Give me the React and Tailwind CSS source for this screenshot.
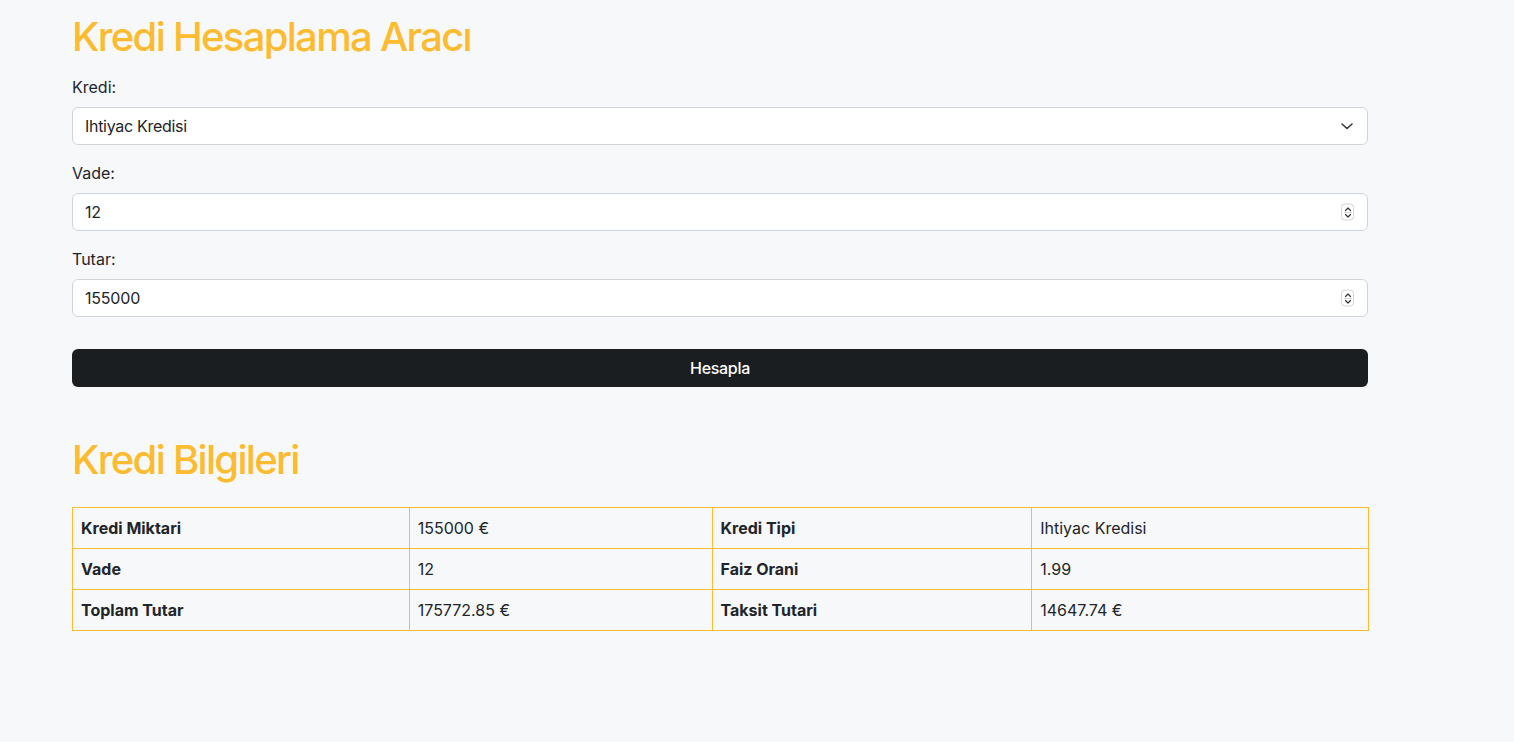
import React from "react";

const font = { fontFamily: "Inter, 'Noto Sans', 'Liberation Sans', sans-serif" };

function Spinner() {
  return (
    <span className="pointer-events-none absolute right-[14px] top-1/2 -translate-y-1/2 flex h-[17px] w-[13px] flex-col items-center justify-center rounded-[4px] border border-[#d4d4d4] bg-white">
      <svg width="8" height="14" viewBox="0 0 8 14" fill="none" stroke="#333" strokeWidth="1.2" strokeLinecap="round" strokeLinejoin="round">
        <path d="M1.5 5 L4 2.5 L6.5 5" />
        <line x1="0" y1="7" x2="8" y2="7" stroke="#ccc" strokeWidth="0.8" />
        <path d="M1.5 9 L4 11.5 L6.5 9" />
      </svg>
    </span>
  );
}

function NumberField({ value }) {
  return (
    <div className="relative">
      <div className="flex h-[38px] items-center rounded-[6px] border border-[#ced4da] bg-white px-[12px] text-[16px] tracking-[-0.2px] text-[#212529]">
        {value}
      </div>
      <Spinner />
    </div>
  );
}

function Row({ a, b, c, d }) {
  return (
    <tr>
      <td className="border border-[#fbbc2f] px-[8px] py-[8px] font-bold leading-[24px]">{a}</td>
      <td className="border border-[#fbbc2f] px-[8px] py-[8px] leading-[24px]">{b}</td>
      <td className="border border-[#fbbc2f] px-[8px] py-[8px] font-bold leading-[24px]">{c}</td>
      <td className="border border-[#fbbc2f] px-[8px] py-[8px] leading-[24px]">{d}</td>
    </tr>
  );
}

export default function App() {
  return (
    <div className="min-h-[742px] bg-[#f7f8fa] text-[#212529]" style={font}>
      <div className="ml-[72px] w-[1296px] pt-[13px]">
        <h1 className="text-[40px] font-medium leading-[48px] tracking-[-1.7px] text-[#fdbb30]">Kredi Hesaplama Aracı</h1>

        <div className="mt-[14px]">
          <label className="mb-[8px] block text-[16px] leading-[24px]">Kredi:</label>
          <div className="relative">
            <div className="flex h-[38px] items-center rounded-[6px] border border-[#ced4da] bg-white px-[12px] text-[16px] tracking-[-0.3px]">
              Ihtiyac Kredisi
            </div>
            <svg className="absolute right-[14px] top-1/2 -translate-y-1/2" width="14" height="10" viewBox="0 0 14 10" fill="none" stroke="#343a40" strokeWidth="1.6" strokeLinecap="round" strokeLinejoin="round">
              <path d="M2 3 L7 7.5 L12 3" />
            </svg>
          </div>
        </div>

        <div className="mt-[16px]">
          <label className="mb-[8px] block text-[16px] leading-[24px]">Vade:</label>
          <NumberField value="12" />
        </div>

        <div className="mt-[16px]">
          <label className="mb-[8px] block text-[16px] leading-[24px]">Tutar:</label>
          <NumberField value="155000" />
        </div>

        <button className="mt-[32px] flex h-[38px] w-full items-center justify-center rounded-[6px] bg-[#1b1e21] text-[16px] font-medium tracking-[-0.3px] text-white">
          Hesapla
        </button>

        <h2 className="mt-[49px] text-[40px] font-medium leading-[48px] tracking-[-1.7px] text-[#fdbb30]">Kredi Bilgileri</h2>

        <table className="mt-[23px] w-[1297px] border-collapse text-left text-[16px]">
          <colgroup>
            <col style={{ width: 337 }} />
            <col style={{ width: 303 }} />
            <col style={{ width: 320 }} />
            <col style={{ width: 337 }} />
          </colgroup>
          <tbody>
            <Row a="Kredi Miktari" b="155000 €" c="Kredi Tipi" d="Ihtiyac Kredisi" />
            <Row a="Vade" b="12" c="Faiz Orani" d="1.99" />
            <Row a="Toplam Tutar" b="175772.85 €" c="Taksit Tutari" d="14647.74 €" />
          </tbody>
        </table>
      </div>
    </div>
  );
}
